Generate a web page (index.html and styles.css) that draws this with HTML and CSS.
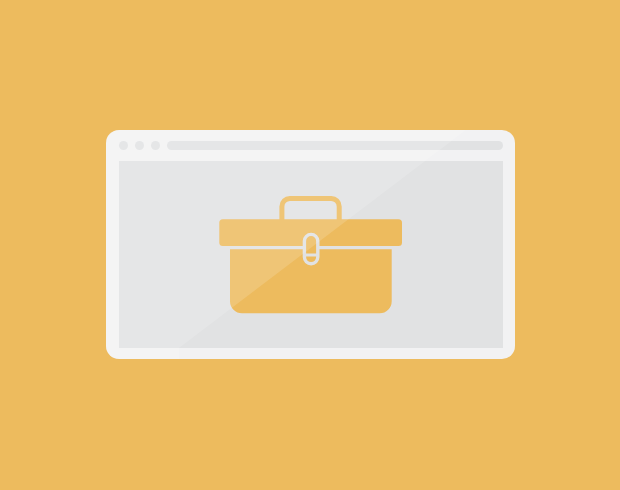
FILE: index.html
```html
<!DOCTYPE html>
<html lang="en">
<head>
    <meta charset="UTF-8">
    <meta name="viewport" content="width=device-width, initial-scale=1.0">
    <title>Toolbox</title>
    <link rel="stylesheet" href="styles.css">
</head>
<body>
    <div class="window">
        <div class="toolbar">
            <span class="dot"></span>
            <span class="dot"></span>
            <span class="dot"></span>
            <span class="address-bar"></span>
        </div>
        <div class="content">
            <svg class="toolbox" viewBox="220 196 183 118" aria-hidden="true">
                <!-- handle -->
                <path class="handle" d="M281.900 220V206.500A8 8 0 0 1 289.900 198.500H331.200A8 8 0 0 1 339.200 206.500V220"/>
                <!-- lid and body -->
                <rect class="gold" x="219.300" y="219.300" width="182.700" height="26.700" rx="3.500"/>
                <path class="gold" d="M230 249.300H391.700V301.300A12 12 0 0 1 379.700 313.300H242A12 12 0 0 1 230 301.300Z"/>
                <!-- clasp -->
                <rect class="clasp" x="304.400" y="234.400" width="13.400" height="29.400" rx="6.700"/>
                <path class="clasp-line" d="M304.400 255H317.800"/>
            </svg>
        </div>
        <!-- light falling across the whole window -->
        <svg class="glare" viewBox="0 0 409 229" aria-hidden="true">
            <polygon points="0,0 360,0 73,218 73,229 0,229"/>
        </svg>
    </div>
</body>
</html>
```

FILE: styles.css
```css
body {
    margin: 0;
    height: 490px;
    padding: 130px 0 0 106px;
    box-sizing: border-box;
    background-color: #edbb5e;
    overflow: hidden;
}
.window {
    position: relative;
    width: 409px;
    height: 229px;
    padding: 11px 12px 11px 13px;
    box-sizing: border-box;
    display: flex;
    flex-direction: column;
    gap: 11px;
    background: #f2f2f3;
    border-radius: 13px;
    overflow: hidden;
}
.toolbar {
    display: flex;
    align-items: center;
    gap: 7px;
    height: 9px;
}
.dot {
    width: 9px;
    height: 9px;
    border-radius: 50%;
    background: #e1e2e3;
}
.address-bar {
    flex: 1;
    height: 9px;
    border-radius: 5px;
    background: #e1e2e3;
}
.content {
    flex: 1;
    display: flex;
    align-items: center;
    justify-content: center;
    background: #e1e2e3;
}
.toolbox {
    width: 183px;
    height: 118px;
    overflow: visible;
}
.gold {
    fill: #edbb5e;
}
.handle {
    fill: none;
    stroke: #edbb5e;
    stroke-width: 5;
}
.clasp {
    fill: #edbb5e;
    stroke: #e1e2e3;
    stroke-width: 3.400;
}
.clasp-line {
    fill: none;
    stroke: #e1e2e3;
    stroke-width: 3;
}
.glare {
    position: absolute;
    left: 0;
    top: 0;
    width: 100%;
    height: 100%;
}
.glare polygon {
    fill: #ffffff;
    opacity: 0.15;
}
```
